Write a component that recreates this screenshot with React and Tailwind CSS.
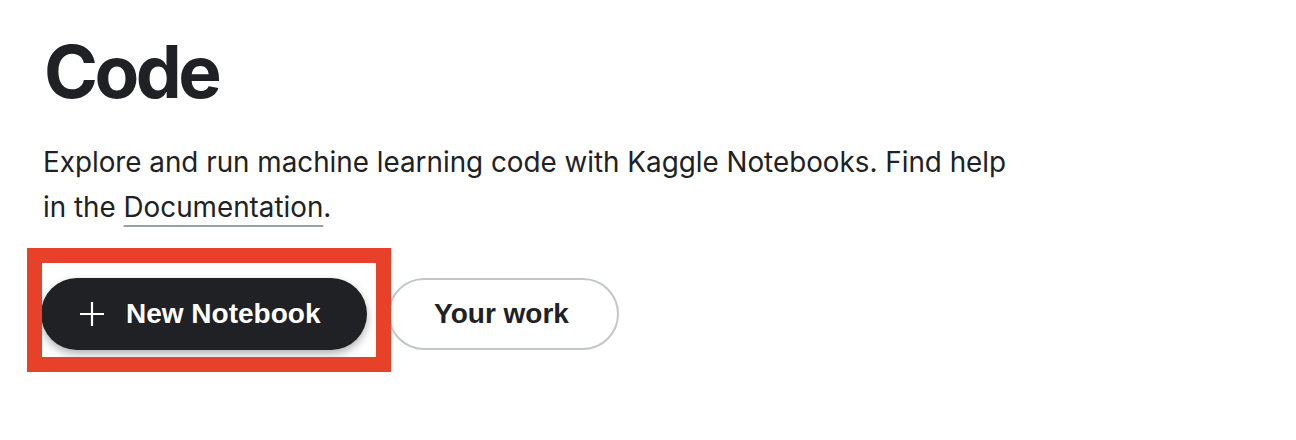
import React from 'react';

const App = () => {
  return (
    <div className="w-[1296px] h-[440px] bg-white text-[#202124] font-['Inter',sans-serif]">
      <div className="pl-[43px] pt-[27px]">
        <h1 className="text-[73px] leading-[90px] font-bold tracking-[-3.5px] ml-[1px]">Code</h1>
        <p className="mt-[23px] text-[27.8px] leading-[45px] max-w-[985px]">
          Explore and run machine learning code with Kaggle Notebooks. Find help in the{' '}
          <a href="#" className="underline decoration-[#9aa0a6] decoration-2 underline-offset-[8px]">
            Documentation
          </a>
          .
        </p>
        <div className="mt-[48px] flex items-center gap-[21px] -ml-[2px]">
          <div className="relative">
            <button className="flex items-center h-[72px] w-[326px] pl-[39px] rounded-full bg-[#202124] text-white font-['Liberation_Sans',Arial,sans-serif] font-bold text-[28px] shadow-[0_4px_8px_rgba(0,0,0,0.3)]">
              <svg width="24" height="24" viewBox="0 0 24 24" className="mr-[22px]">
                <path d="M12 0v24M0 12h24" stroke="white" strokeWidth="2.2" />
              </svg>
              New Notebook
            </button>
            <div className="absolute -left-[14px] -top-[30px] w-[364px] h-[124px] border-[15px] border-[#e8412a] pointer-events-none" />
          </div>
          <button className="h-[72px] w-[231px] pr-[4px] rounded-full border-2 border-[#c4c7c9] bg-white text-[#202124] font-['Liberation_Sans',Arial,sans-serif] font-bold text-[28px]">
            Your work
          </button>
        </div>
      </div>
    </div>
  );
};

export default App;
